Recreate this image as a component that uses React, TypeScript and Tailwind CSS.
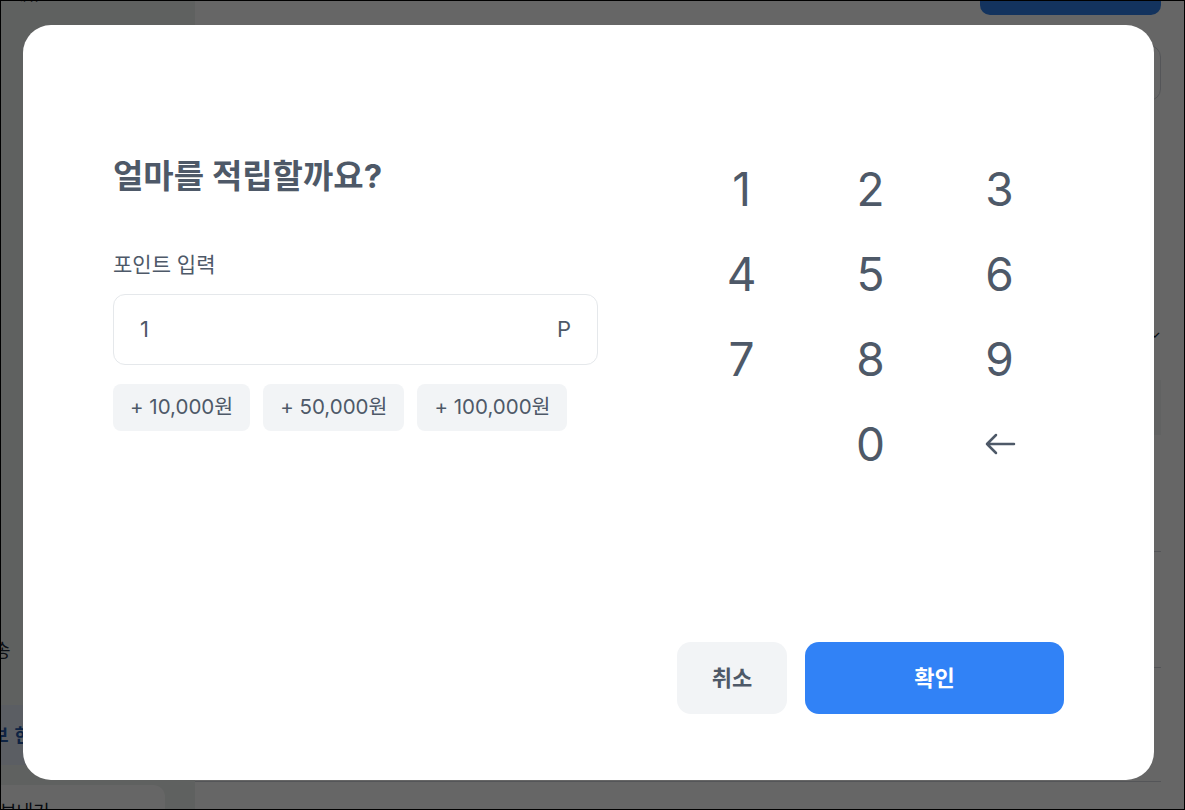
import React from "react";

const FONT = '"Inter", "Noto Sans CJK KR", sans-serif';

function BackArrow() {
  return (
    <svg width="32" height="22" viewBox="0 0 32 22" fill="none">
      <path d="M30 11H3M12 2L3 11L12 20" stroke="#4e5968" strokeWidth="2.5" strokeLinecap="round" strokeLinejoin="round" />
    </svg>
  );
}

function Key({ children }: { children?: React.ReactNode }) {
  return (
    <button className="h-[85px] flex items-center justify-center text-[46px] leading-none text-[#4e5968] font-normal">
      {children}
    </button>
  );
}

export default function App() {
  return (
    <div className="relative w-[1185px] h-[810px] overflow-hidden bg-white" style={{ fontFamily: FONT }}>
      {/* background page */}
      <div className="flex h-full">
        <aside className="w-[195px] bg-[#eef3f0] flex flex-col">
          <div className="h-[20px] px-3 -mt-[16px] text-[16px] leading-[20px] text-gray-800">메뉴</div>
          <div className="flex-1" />
          <div className="h-[40px] -ml-[6px] text-[18px] text-gray-800 flex items-center">송</div>
          <div className="h-[35px]" />
          <div className="h-[60px] bg-[#e3ebf7] text-[#2457a8] text-[18px] font-bold flex items-center -ml-[8px] gap-[6px]">
            <span>보</span>
            <span>한</span>
          </div>
          <div className="h-[20px]" />
          <div className="h-[25px] w-[165px] bg-white rounded-tr-[12px] text-[18px] leading-[20px] text-gray-900 pt-[17px] overflow-hidden">보내기</div>
        </aside>
        <main className="flex-1 flex flex-col pr-[24px]">
          <div className="flex justify-end">
            <div className="w-[181px] h-[15px] bg-[#3080eb] rounded-b-[10px]" />
          </div>
          <div className="mt-[30px] ml-auto w-[200px] h-[56px] border border-gray-300 rounded-[12px]" />
          <div className="h-[279px] flex items-end justify-end pb-[36px] text-gray-900 text-[16px]">⌄</div>
          <div className="h-[55px] bg-[#f2f4f6]" />
          <div className="h-[117px] border-b border-gray-300" />
          <div className="h-[116px] border-b border-gray-300" />
          <div className="h-[114px] border-b border-gray-300" />
        </main>
      </div>

      {/* overlay */}
      <div className="absolute inset-0 bg-black/60" />

      {/* modal */}
      <div className="absolute left-[23px] top-[25px] w-[1131px] h-[755px] bg-white rounded-[28px] flex gap-[79px] pl-[90px] pr-[90px] pt-[121px] pb-[66px]">
        <div className="w-[485px] flex flex-col pt-[10px]">
          <h1 className="text-[33px] leading-[40px] font-bold text-[#4e5968] whitespace-nowrap">얼마를 적립할까요?</h1>
          <div className="mt-[55px] text-[21px] leading-[28px] text-[#4e5968]">포인트 입력</div>
          <div className="mt-[15px] h-[71px] border border-[#e5e8eb] rounded-[12px] flex items-center justify-between px-[26px] text-[22px] text-[#4e5968]">
            <span>1</span>
            <span>P</span>
          </div>
          <div className="mt-[19px] flex gap-[13px]">
            {["+ 10,000원", "+ 50,000원", "+ 100,000원"].map((t) => (
              <button key={t} className="h-[47px] px-[17px] rounded-[8px] bg-[#f2f4f6] text-[20.5px] text-[#4e5968] whitespace-nowrap">
                {t}
              </button>
            ))}
          </div>
        </div>
        <div className="w-[387px] flex flex-col justify-between">
          <div className="grid grid-cols-3">
            {["1", "2", "3", "4", "5", "6", "7", "8", "9"].map((d) => (
              <Key key={d}>{d}</Key>
            ))}
            <Key />
            <Key>0</Key>
            <Key>
              <BackArrow />
            </Key>
          </div>
          <div className="flex gap-[18px]">
            <button className="w-[110px] h-[72px] rounded-[14px] bg-[#f2f4f6] text-[22px] font-bold text-[#4e5968]">취소</button>
            <button className="flex-1 h-[72px] rounded-[14px] bg-[#3182f6] text-[22px] font-bold text-white">확인</button>
          </div>
        </div>
      </div>

      {/* screenshot frame */}
      <div className="pointer-events-none absolute inset-0 border border-black" />
    </div>
  );
}
